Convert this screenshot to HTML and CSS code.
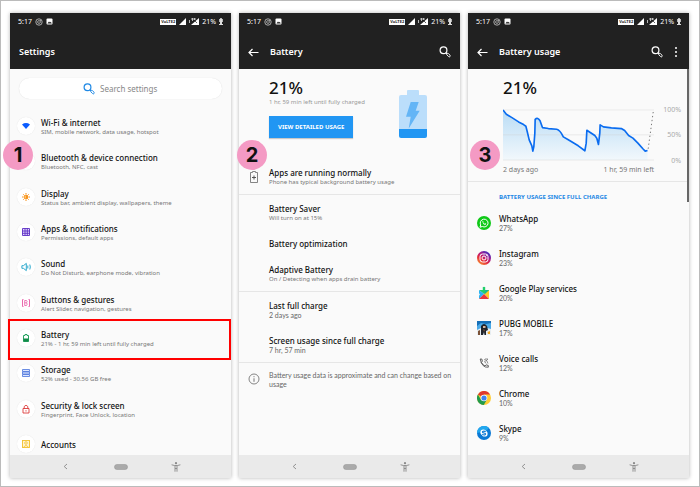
FILE: index.html
```html
<!DOCTYPE html>
<html lang="en">
<head>
    <meta charset="UTF-8">
    <meta name="viewport" content="width=device-width, initial-scale=1">
    <title>Battery usage in three steps</title>
    <link rel="stylesheet" href="styles.css">
</head>
<body>
<!-- shared icons -->
<svg class="defs" aria-hidden="true">
    <symbol id="insta" viewBox="0 0 8 8"><circle cx="4" cy="4" r="3.2" fill="none" stroke="#ccc" stroke-width=".8"/><circle cx="4" cy="4" r="1.4" fill="none" stroke="#ccc" stroke-width=".7"/><circle cx="5.6" cy="2.4" r=".5" fill="#ccc"/></symbol>
    <symbol id="photo" viewBox="0 0 7 7"><rect x=".5" y=".5" width="6" height="6" rx="1" fill="#fff"/><path d="M1.4 5.4L3 3.6l1 1 .8-.8 1 1.6z" fill="#222"/></symbol>
    <symbol id="signal" viewBox="0 0 7 7"><path d="M0 7L7 0v7z" fill="#fff"/></symbol>
    <symbol id="signal2" viewBox="0 0 10 7"><path d="M2 7L10 0v7z" fill="#fff"/><path d="M.5 2v3M3.5 0v3M5.5 0v2M2 1h5" stroke="#ddd" stroke-width=".8"/><path d="M5 2l3 3" stroke="#222" stroke-width=".7"/></symbol>
    <symbol id="batt" viewBox="0 0 4 7"><path d="M1.2 0h1.6v1h1v3H3v2h1v1H0V6h1V4H.2V1h1z" fill="#ddd"/></symbol>
    <symbol id="lens" viewBox="0 0 12 12"><circle cx="4.5" cy="4.3" r="3.4" fill="none" stroke="currentColor" stroke-width="1.2"/><path d="M7 6.8l1 1" stroke="currentColor" stroke-width="1.2"/><rect x="7.4" y="8.1" width="4.2" height="2" rx="1" transform="rotate(45 9.5 9.1)" fill="none" stroke="currentColor" stroke-width=".9"/></symbol>
    <symbol id="arrow" viewBox="0 0 11 9"><path d="M10.5 4.5H1M4.5 1L1 4.5 4.5 8" fill="none" stroke="#fff" stroke-width="1.2"/></symbol>
    <symbol id="back" viewBox="0 0 5 7"><path d="M4 1L1.2 3.5 4 6" fill="none" stroke="#888" stroke-width=".9"/></symbol>
    <symbol id="home" viewBox="0 0 14 6"><rect x=".5" y=".5" width="13" height="5" rx="2.5" fill="#aaa" stroke="#999" stroke-width=".6"/></symbol>
    <symbol id="man" viewBox="0 0 10 10"><circle cx="5" cy="1.2" r="1.1" fill="#888"/><path d="M.6 2.8l3 .7h2.8l3-.7M4 3.5v6.2M6 3.5v6.2M4 6.5h2" fill="none" stroke="#888" stroke-width=".9"/></symbol>
</svg>

<main class="board">
    <section class="phone">
        <span class="badge">1</span>
        <header class="top">
            <div class="status">
                <span>5:17</span>
                <svg class="s8"><use href="#insta"/></svg>
                <svg class="s7"><use href="#photo"/></svg>
                <span class="volte">VoLTE2</span>
                <svg class="s7"><use href="#signal"/></svg>
                <svg class="s10"><use href="#signal2"/></svg>
                <span>21%</span>
                <svg class="s4"><use href="#batt"/></svg>
            </div>
            <div class="bar"><h1>Settings</h1></div>
        </header>
        <div class="content">
            <label class="search">
                <svg class="s12"><use href="#lens"/></svg>
                <input type="text" placeholder="Search settings" aria-label="Search settings">
            </label>
            <ul class="settings">
                <li>
                    <svg class="round" viewBox="0 0 18 18"><path d="M5 7.4q4-2.6 8 0L9 12z" fill="#0a5cff"/></svg>
                    <div><h2>Wi-Fi &amp; internet</h2><p>SIM, mobile network, data usage, hotspot</p></div>
                </li>
                <li>
                    <svg class="round" viewBox="0 0 18 18"><path d="M6.5 6.5l5 5L9 14V4l2.5 2.5-5 5" fill="none" stroke="#0a5cff"/></svg>
                    <div><h2>Bluetooth &amp; device connection</h2><p>Bluetooth, NFC, cast</p></div>
                </li>
                <li>
                    <svg class="round" viewBox="0 0 18 18"><circle cx="9" cy="9" r="2" fill="#ffc267" stroke="#f7931e"/><path d="M9 7a2 2 0 0 1 0 4z" fill="#f7931e"/><path d="M9 5v1M9 12v1M5 9h1M12 9h1M6.2 6.2l.7.7M11.1 11.1l.7.7M6.2 11.8l.7-.7M11.1 6.9l.7-.7" stroke="#f7931e"/></svg>
                    <div><h2>Display</h2><p>Status bar, ambient display, wallpapers, theme</p></div>
                </li>
                <li>
                    <svg class="round" viewBox="0 0 18 18"><path d="M5.5 5.5h7v7h-7zM5.5 8h7M5.5 10.3h7M8 5.5v7M10.3 5.5v7" fill="#e6d8ff" stroke="#5b2fc4" stroke-width=".9"/></svg>
                    <div><h2>Apps &amp; notifications</h2><p>Permissions, default apps</p></div>
                </li>
                <li>
                    <svg class="round" viewBox="0 0 18 18"><path d="M4.9 7.7h1.5L9.3 5.4v7.2L6.4 10.3H4.9z" fill="none" stroke="#16a0c8" stroke-width=".9"/><path d="M10.8 7.5v3M12.8 6.5q1 2.5 0 5" fill="none" stroke="#16a0c8" stroke-width=".9"/></svg>
                    <div><h2>Sound</h2><p>Do Not Disturb, earphone mode, vibration</p></div>
                </li>
                <li>
                    <svg class="round" viewBox="0 0 18 18"><path d="M6.5 5.5h-1v7h1M11.5 5.5h1v7h-1" fill="none" stroke="#e85aa5" stroke-width=".9"/><path d="M7.7 6.5h1.8q1.2 1 0 2.3q1.4 1.3 0 2.7H7.7zM7.7 8.8h1.8" fill="none" stroke="#e85aa5" stroke-width=".8"/></svg>
                    <div><h2>Buttons &amp; gestures</h2><p>Alert Slider, navigation, gestures</p></div>
                </li>
                <li class="marked">
                    <svg class="round" viewBox="0 0 18 18"><path d="M8 5.5h2v1h1.5v6h-5v-6H8z" fill="#fff" stroke="#129a54" stroke-width=".9"/><path d="M6.5 9.5h5v3h-5z" fill="#128a48"/></svg>
                    <div><h2>Battery</h2><p>21% - 1 hr, 59 min left until fully charged</p></div>
                </li>
                <li>
                    <svg class="round" viewBox="0 0 18 18"><path d="M5.5 5.5h7v2h-7zM5.5 8h7v2h-7zM5.5 10.5h7v2h-7z" fill="#dfe8ff" stroke="#4a74dc" stroke-width=".8"/></svg>
                    <div><h2>Storage</h2><p>52% used - 30.56 GB free</p></div>
                </li>
                <li>
                    <svg class="round" viewBox="0 0 18 18"><path d="M6 8.5h6V13H6zM7.2 8.5v-2q1.8-2.6 3.6 0v2M9 10.2v1.3" fill="none" stroke="#dc3a3a" stroke-width=".9"/></svg>
                    <div><h2>Security &amp; lock screen</h2><p>Fingerprint, Face Unlock, location</p></div>
                </li>
                <li>
                    <svg class="round" viewBox="0 0 18 18"><rect x="5.5" y="5.5" width="7" height="7" fill="#fff4d0" stroke="#f3bf2c" stroke-width=".9"/><circle cx="9" cy="8" r="1.3" fill="none" stroke="#f3bf2c" stroke-width=".8"/><path d="M6.5 12.5q2.5-4 5 0" fill="none" stroke="#f3bf2c" stroke-width=".8"/></svg>
                    <div><h2>Accounts</h2></div>
                </li>
            </ul>
        </div>
        <nav class="keys">
            <svg class="s5"><use href="#back"/></svg>
            <svg class="s14"><use href="#home"/></svg>
            <svg class="man"><use href="#man"/></svg>
        </nav>
    </section>

    <section class="phone">
        <span class="badge">2</span>
        <header class="top">
            <div class="status">
                <span>5:17</span>
                <svg class="s8"><use href="#insta"/></svg>
                <svg class="s7"><use href="#photo"/></svg>
                <span class="volte">VoLTE2</span>
                <svg class="s7"><use href="#signal"/></svg>
                <svg class="s10"><use href="#signal2"/></svg>
                <span>21%</span>
                <svg class="s4"><use href="#batt"/></svg>
            </div>
            <div class="bar">
                <button class="icon" aria-label="Back"><svg class="s11"><use href="#arrow"/></svg></button>
                <h1>Battery</h1>
                <button class="icon" aria-label="Search"><svg class="s12"><use href="#lens"/></svg></button>
            </div>
        </header>
        <div class="content">
            <div class="hero">
                <div>
                    <strong class="percent">21%</strong>
                    <p class="left">1 hr, 59 min left until fully charged</p>
                    <button class="detail">VIEW DETAILED USAGE</button>
                </div>
                <svg class="cell" viewBox="0 0 28 48">
                    <path d="M9 0h10q1 0 1 1v4h6q2 0 2 2v32H0V7q0-2 2-2h6V1q0-1 1-1z" fill="#bbdefb"/>
                    <path d="M0 39h28v7q0 2-2 2H2q-2 0-2-2z" fill="#2196f3"/>
                    <path d="M11.7 12h8l-3 8.7h4L9.7 38.5l2-11.8H7z" fill="#64b5f6"/>
                </svg>
            </div>
            <ul class="rows">
                <li class="row">
                    <svg class="lead" viewBox="0 0 14 14"><path d="M5.5 2.5v-1h3v1h2v10h-7v-10z" fill="none" stroke="#777" stroke-width=".9"/><path d="M7 5.5v4M5 7.5h4" stroke="#555"/></svg>
                    <div><h2>Apps are running normally</h2><p>Phone has typical background battery usage</p></div>
                </li>
            </ul>
            <ul class="rows">
                <li class="row"><div><h2>Battery Saver</h2><p>Will turn on at 15%</p></div></li>
                <li class="row"><div><h2>Battery optimization</h2></div></li>
                <li class="row"><div><h2>Adaptive Battery</h2><p>On / Detecting when apps drain battery</p></div></li>
            </ul>
            <ul class="rows">
                <li class="row"><div><h2>Last full charge</h2><p class="value">2 days ago</p></div></li>
                <li class="row"><div><h2>Screen usage since full charge</h2><p class="value">7 hr, 57 min</p></div></li>
            </ul>
            <div class="row note">
                <svg class="lead" viewBox="0 0 14 14"><circle cx="7" cy="7" r="5" fill="none" stroke="#777" stroke-width=".9"/><path d="M7 6.3v3.5M7 4.2v1" stroke="#666" stroke-width=".9"/></svg>
                <p class="value">Battery usage data is approximate and can change based on usage</p>
            </div>
        </div>
        <nav class="keys">
            <svg class="s5"><use href="#back"/></svg>
            <svg class="s14"><use href="#home"/></svg>
            <svg class="man"><use href="#man"/></svg>
        </nav>
    </section>

    <section class="phone">
        <span class="badge inset">3</span>
        <header class="top">
            <div class="status">
                <span>5:17</span>
                <svg class="s8"><use href="#insta"/></svg>
                <svg class="s7"><use href="#photo"/></svg>
                <span class="volte">VoLTE2</span>
                <svg class="s7"><use href="#signal"/></svg>
                <svg class="s10"><use href="#signal2"/></svg>
                <span>21%</span>
                <svg class="s4"><use href="#batt"/></svg>
            </div>
            <div class="bar">
                <button class="icon" aria-label="Back"><svg class="s11"><use href="#arrow"/></svg></button>
                <h1>Battery usage</h1>
                <button class="icon" aria-label="Search"><svg class="s12"><use href="#lens"/></svg></button>
                <button class="icon" aria-label="More"><svg class="s4" viewBox="0 0 4 12"><circle cx="2" cy="2" r="1" fill="#fff"/><circle cx="2" cy="6" r="1" fill="#fff"/><circle cx="2" cy="10" r="1" fill="#fff"/></svg></button>
            </div>
        </header>
        <div class="content scroll">
            <div class="usage">
                <strong class="percent">21%</strong>
                <div class="graph">
                    <svg viewBox="0 0 456 156">
                        <defs><linearGradient id="fade" x1="0" y1="0" x2="0" y2="1"><stop offset="0" stop-color="#b9dcf5"/><stop offset="1" stop-color="#f2f8fc"/></linearGradient></defs>
                        <path d="M0 3L10 16 27 26 47 39 62 47 69 52 73 68 79 93 87 111 90 127 93 113 96 73 97 31Q105 24 112 36L119 56 137 59 162 61Q172 63 182 84L197 93 227 111 247 126 251 103 253 64 262 70 277 80 283 88 288 107 292 73 293 48 303 54 327 57 357 59 367 65 379 80 392 88 407 103 422 120 429 127H436V154H0z" fill="url(#fade)"/>
                        <path d="M0 3h456M0 78h456M0 154h456" stroke="#ccc" stroke-opacity=".55" stroke-width="2"/>
                        <path d="M0 3L10 16 27 26 47 39 62 47 69 52 73 68 79 93 87 111 90 127 93 113 96 73 97 31Q105 24 112 36L119 56 137 59 162 61Q172 63 182 84L197 93 227 111 247 126 251 103 253 64 262 70 277 80 283 88 288 107 292 73 293 48 303 54 327 57 357 59 367 65 379 80 392 88 407 103 422 120 429 127 436 125" fill="none" stroke="#0a6cf0" stroke-width="5" stroke-linejoin="round"/>
                        <path d="M438 120L454 3" stroke="#777" stroke-width="3" stroke-dasharray="4 8"/>
                    </svg>
                    <div class="scale"><span>100%</span><span>50%</span><span>0%</span></div>
                    <div class="span"><span>2 days ago</span><span>1 hr, 59 min left</span></div>
                </div>
            </div>
            <h3>BATTERY USAGE SINCE FULL CHARGE</h3>
            <ul>
                <li class="row">
                    <svg class="lead" viewBox="0 0 14 14"><circle cx="7" cy="7" r="7" fill="#0fc918"/><path d="M3 11.2l.7-2.3A3.9 3.9 0 1 1 5.3 10.5z" fill="none" stroke="#fff"/><path d="M5.4 5.2q.6-.9 1 .3l-.2.7q.5 1 1.5 1.5l.8-.4q1.3.5.3 1.2Q6 9.500 5.400 5.200z" fill="#fff"/></svg>
                    <div><h2>WhatsApp</h2><p class="value">27%</p></div>
                </li>
                <li class="row">
                    <svg class="lead" viewBox="0 0 14 14"><defs><linearGradient id="ig" x1="0" y1="1" x2=".7" y2="0"><stop offset="0" stop-color="#ffb52c"/><stop offset=".45" stop-color="#e3263f"/><stop offset=".7" stop-color="#a81d8b"/><stop offset="1" stop-color="#3a2bc0"/></linearGradient></defs><circle cx="7" cy="7" r="7" fill="url(#ig)"/><rect x="3" y="3" width="8" height="8" rx="2.5" fill="none" stroke="#fff"/><circle cx="7" cy="7" r="2" fill="none" stroke="#fff"/><circle cx="9.4" cy="4.6" r=".5" fill="#fff"/></svg>
                    <div><h2>Instagram</h2><p class="value">23%</p></div>
                </li>
                <li class="row">
                    <svg class="lead" viewBox="0 0 14 14"><path d="M2 4h3.8V2.5a1.3 1.3 0 1 1 2.4 0V4H12v3L7 8z" fill="#1fcf6b"/><path d="M2 4l5 4-5 5V9.8q1.8-1.3 0-2.6z" fill="#2bb3f3"/><path d="M12 4v9L7 8z" fill="#ffc928"/><path d="M2 13l5-5 5 5z" fill="#e8343c"/><path d="M8 4h4L7.5 8.5z" fill="#18b890"/></svg>
                    <div><h2>Google Play services</h2><p class="value">20%</p></div>
                </li>
                <li class="row">
                    <svg class="lead" viewBox="0 0 14 14"><rect width="14" height="14" rx="1" fill="#4aa9e8"/><path d="M0 0h14v2L9 3 4 2 0 5z" fill="#156fb8"/><path d="M0 9l4-2h6l4 1v6H0z" fill="#e8eef2"/><path d="M4 5q3-4 6 0l1 4-2 1v4H7.5l-.5-3-1 3H4V9z" fill="#20242c"/><path d="M6 5h2.5v2H6z" fill="#d8b49a"/><path d="M1 10l2-1v5H1zM6 8l2 1-1 2z" fill="#7b5136"/><path d="M10.5 11l2.5-1v3h-2z" fill="#f0a320"/></svg>
                    <div><h2>PUBG MOBILE</h2><p class="value">17%</p></div>
                </li>
                <li class="row">
                    <svg class="lead" viewBox="0 0 14 14"><path d="M3.2 3h1.6l.6 2.2-1.1 1.1Q5.5 8.8 8 10l1.1-1.2 2.2.7v1.7Q5 12 3.2 3z" fill="none" stroke="#555" stroke-width=".9"/><path d="M7 5.5q1.5.3 2 2M7 3.5q3.5.3 4 4M8 3h3M11 3L8.5 5.5" fill="none" stroke="#777" stroke-width=".8"/></svg>
                    <div><h2>Voice calls</h2><p class="value">12%</p></div>
                </li>
                <li class="row">
                    <svg class="lead" viewBox="0 0 14 14"><circle cx="7" cy="7" r="7" fill="#fc3"/><path d="M7 7L.9 3.5A7 7 0 0 1 13.1 3.5H7z" fill="#df3a2f"/><path d="M.9 3.5A7 7 0 0 0 6.8 14L9.8 8.700 7 7 4 8.700z" fill="#229a4b"/><circle cx="7" cy="7" r="3.3" fill="#fff"/><circle cx="7" cy="7" r="2.6" fill="#3f83f0"/></svg>
                    <div><h2>Chrome</h2><p class="value">10%</p></div>
                </li>
                <li class="row">
                    <svg class="lead" viewBox="0 0 14 14"><circle cx="7" cy="7" r="7" fill="#0a78d4"/><path d="M0 7a7 7 0 0 1 12-5L9 5z" fill="#22a7ee"/><circle cx="6.3" cy="6.3" r="2.9" fill="#fff"/><circle cx="7.7" cy="7.7" r="2.9" fill="#fff"/><path d="M8.7 5.7Q7 4.6 5.6 5.5q-.7 1 1.4 1.5 2.2.6 1.4 1.5Q7 9.5 5.3 8.3" fill="none" stroke="#0a78d4" stroke-width="1.1"/></svg>
                    <div><h2>Skype</h2><p class="value">9%</p></div>
                </li>
            </ul>
        </div>
        <nav class="keys">
            <svg class="s5"><use href="#back"/></svg>
            <svg class="s14"><use href="#home"/></svg>
            <svg class="man"><use href="#man"/></svg>
        </nav>
    </section>
</main>
</body>
</html>
```
FILE: styles.css
```css
*{
    margin:0;
    padding:0;
    box-sizing: border-box;
    list-style: none;
}
body{
    font-family: "Noto Sans", "Open Sans", sans-serif;
    font-size: 7px;
    line-height: 9px;
    color: #777;
    background: #fff;
}
svg{
    display: block;
    flex: none;
}
button{
    font: inherit;
    border:none;
    background: none;
    cursor: pointer;
}
.defs{
    position: absolute;
    width: 0;
    height: 0;
}
.s4{ width: 4px; height: 7px; }
.s5{ width: 5px; height: 7px; }
.s7{ width: 7px; height: 7px; }
.s8{ width: 8px; height: 8px; }
.s10{ width: 10px; height: 7px; }
.s11{ width: 11px; height: 9px; }
.s12{ width: 12px; height: 12px; }
.s14{ width: 14px; height: 6px; }
.man{ width: 10px; height: 10px; }

.board{
    display: grid;
    grid-template-columns: repeat(3, 1fr);
    gap: 8px;
    min-height: 100vh;
    padding: 12px 10px 8px 9px;
    border:1px solid #bbb;
}
.phone{
    position: relative;
    display: flex;
    flex-direction: column;
    background: #fafafa;
    box-shadow: 0 0 4px rgba(0,0,0,.3);
}
/* step number, hangs over the left edge */
.badge{
    position: absolute;
    z-index: 2;
    left: -7px;
    top: 127px;
    width: 30px;
    height: 30px;
    border-radius: 50%;
    background: #f49ac4;
    color: #111;
    font: bold 20px/30px "Inter", sans-serif;
    text-align: center;
}
.badge.inset{
    left: 2px;
}
.phone:nth-child(2) .badge{
    left: -2px;
}

.top{
    background: #212121;
    color: #fff;
    padding: 4px 8px 0;
}
.status{
    display: flex;
    align-items: center;
    gap: 3px;
    height: 9px;
}
.volte{
    margin-left: auto;
    padding: 0 1px;
    background: #fff;
    color: #222;
    font-size: 4px;
    line-height: 6px;
    font-weight: bold;
}
.bar{
    display: flex;
    align-items: center;
    height: 43px;
    padding: 9px 1px 0;
}
.bar h1{
    flex: 1;
    font-size: 9px;
    line-height: 12px;
    font-weight: 600;
}
.icon{
    color: #fff;
}
.icon:first-child{
    width: 22px;
}
.icon:nth-child(4){
    padding: 0 2px 0 11px;
}
.icon .s4{
    height: 12px;
}

.content{
    flex: 1;
    display: flex;
    flex-direction: column;
}
h2{
    font-size: 8px;
    line-height: 11px;
    font-weight: 500;
    color: #111;
}
p{
    font-size: 6px;
}
.value{
    font-family: "Lato", sans-serif;
    font-size: 7px;
    color: #666;
}
.search{
    display: flex;
    align-items: center;
    justify-content: center;
    gap: 5px;
    height: 21px;
    margin: 9px 9px 18px;
    border-radius: 11px;
    background: #fff;
    box-shadow: 0 0 1px rgba(0,0,0,.15);
    color: #1e88e5;
}
.search input{
    width: 58px;
    border:none;
    outline: none;
    background: none;
    font: 8px/12px "Noto Sans", sans-serif;
    color: #333;
}
.search input::placeholder{
    color: #888;
}
.settings{
    flex: 1;
    display: flex;
    flex-direction: column;
    justify-content: space-between;
}
.settings li{
    display: flex;
    gap: 6px;
    height: 20px;
    padding-left: 7px;
}
.settings li div{
    align-self: center;
}
.round{
    width: 18px;
    height: 18px;
    border-radius: 50%;
    background: #fff;
    box-shadow: 0 0 1px rgba(0,0,0,.12);
}
.marked{
    position: relative;
}
.marked:after{
    content: "";
    position: absolute;
    top: -10px;
    bottom: -11px;
    left: -2px;
    right: 0;
    border:2px solid #f00;
}

.hero{
    display: flex;
    justify-content: space-between;
    padding: 9px 33px 21px 30px;
}
.percent{
    display: block;
    font-size: 17px;
    line-height: 20px;
    font-weight: 500;
    color: #111;
}
.left{
    color: #999;
}
.detail{
    height: 22px;
    margin-top: 9px;
    padding: 0 9px;
    background: #2196f3;
    color: #fff;
    font-size: 6px;
    font-weight: 700;
    box-shadow: 0 1px 1px rgba(0,0,0,.2);
}
.cell{
    width: 28px;
    height: 48px;
    margin-top: 12px;
}
.rows{
    border-bottom: 1px solid #e6e6e6;
}
.row{
    display: flex;
    padding: 8px 4px 7px 31px;
}
.rows .row, .note{
    padding-left: 30px;
}
.lead{
    width: 14px;
    height: 14px;
    margin: 3px 8px 0 -22px;
}
.note .lead{
    margin-top: 1px;
}

.scroll{
    position: relative;
}
.scroll:after{
    content: "";
    position: absolute;
    top: 0;
    right: 0;
    width: 2px;
    height: 133px;
    background: #666;
}
.usage{
    padding: 9px 8px 7px 35px;
    border-bottom: 1px solid #e6e6e6;
}
.graph{
    display: grid;
    grid-template-columns: 1fr auto;
    column-gap: 9px;
    row-gap: 4px;
    margin-top: 11px;
}
.graph svg{
    width: 100%;
}
.scale{
    display: flex;
    flex-direction: column;
    justify-content: space-between;
    margin: -4px 0;
    text-align: right;
    color: #aaa;
}
.span{
    display: flex;
    justify-content: space-between;
}
h3{
    padding: 11px 8px 3px 31px;
    font-size: 6px;
    line-height: 9px;
    font-weight: 700;
    color: #1e88e5;
}
.keys{
    display: grid;
    grid-template-columns: repeat(3, 1fr);
    align-items: center;
    justify-items: center;
    height: 23px;
    padding: 0 28px;
    background: #eaeaea;
}
```
